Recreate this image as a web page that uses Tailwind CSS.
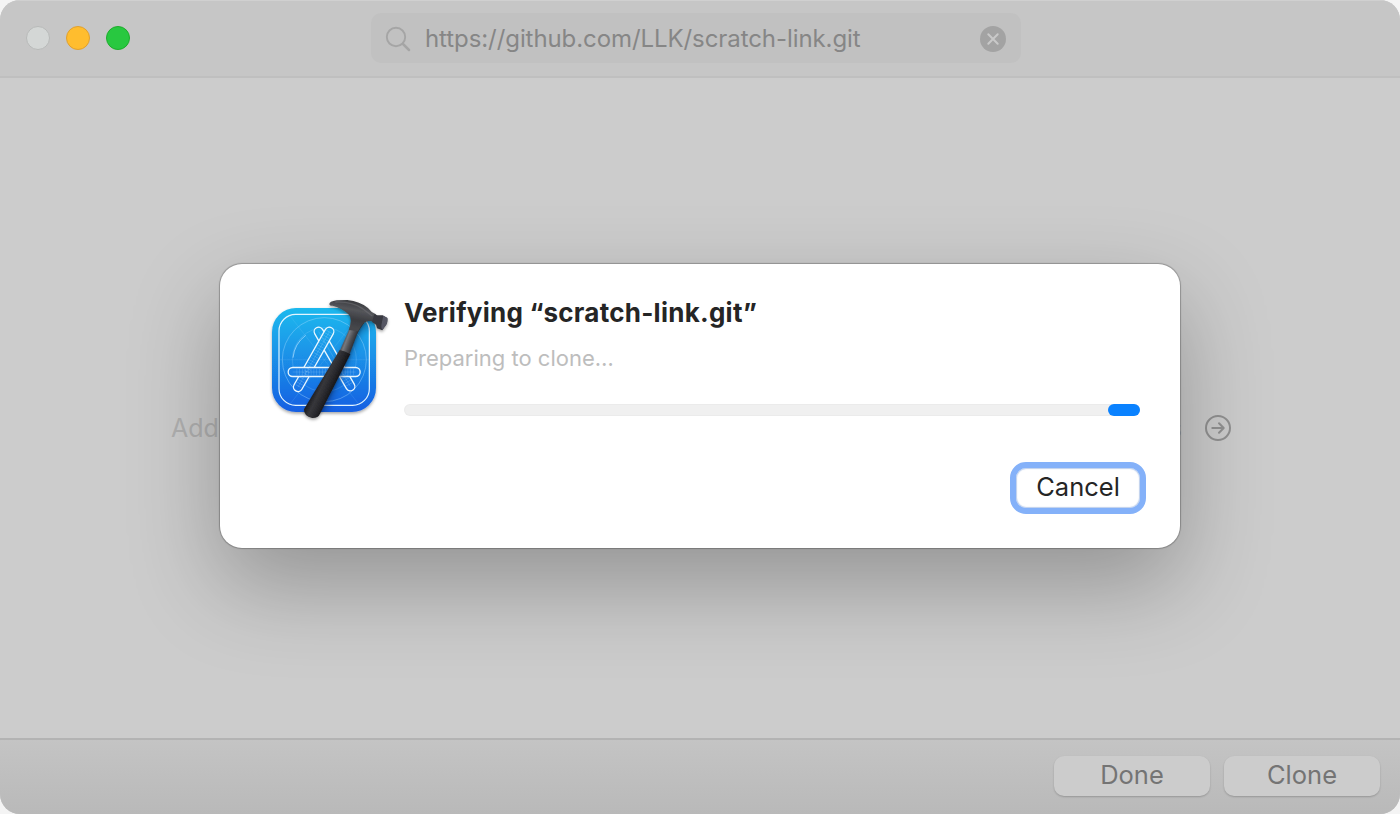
<!DOCTYPE html>
<html lang="en">
<head>
<meta charset="utf-8">
<title>Clone repository</title>
<script src="https://cdn.jsdelivr.net/npm/@tailwindcss/browser@4"></script>
</head>
<body class="bg-[#f4f4f4] font-['Inter',sans-serif]">
<div class="relative flex h-[814px] w-[1400px] flex-col overflow-hidden rounded-[20px] bg-[#cccccc]">
  <header class="relative flex h-[78px] shrink-0 items-start justify-center border-t border-b-2 border-t-[#d0d0d0] border-b-[#bfbfbf] bg-[#c6c6c6] pt-3 pr-2">
    <div class="absolute top-[25px] left-[26px] flex gap-4">
      <span class="size-6 rounded-full border border-[#b8bab9] bg-[#d4d7d6]"></span>
      <span class="size-6 rounded-full border border-[#e0a02e] bg-[#ffbd2e]"></span>
      <span class="size-6 rounded-full border border-[#1dad2b] bg-[#28c840]"></span>
    </div>
    <div class="flex h-[50px] w-[650px] items-center rounded-[10px] bg-[#c1c1c1] pt-[2px] pr-[15px] pl-[14px]">
      <svg class="size-7 shrink-0" viewBox="0 0 28 28" fill="none" stroke="#a5a5a5" stroke-linecap="round"><circle cx="11" cy="12" r="9.2" stroke-width="1.9"/><path d="M18 19l6 6" stroke-width="2.5"/></svg>
      <span class="ml-3 flex-1 text-2xl tracking-[-0.08px] whitespace-nowrap text-[#868686]">https://github.com/LLK/scratch-link.git</span>
      <svg class="size-[26px]" viewBox="0 0 26 26"><circle cx="13" cy="13" r="13" fill="#a3a3a3"/><path d="M8.3 8.3l9.4 9.4M17.7 8.3l-9.4 9.4" stroke="#c9c9c9" stroke-width="2" stroke-linecap="round"/></svg>
    </div>
  </header>

  <main class="flex flex-1 items-center pt-[39px] pr-[169px] pl-[171px]">
    <span class="pt-[2px] text-[25px] text-[#b0b0b0]">Add</span>
    <span class="ml-auto pt-[2px] text-[25px] text-[#b0b0b0]">s</span>
    <svg class="ml-[23px] size-[26px]" viewBox="0 0 26 26" fill="none" stroke="#919191" stroke-width="2" stroke-linecap="round" stroke-linejoin="round"><circle cx="13" cy="13" r="12"/><path d="M7.3 13h11M14 8.2l4.7 4.8-4.7 4.8"/></svg>
  </main>

  <footer class="flex h-[76px] shrink-0 items-start justify-end gap-[14px] border-t-2 border-[#b3b3b3] bg-linear-to-b from-[#c4c4c4] to-[#b9b9b9] pt-4 pr-5">
    <button class="h-10 w-[156px] rounded-[10px] bg-[#cccccc] pb-[2px] text-[25.5px] leading-[38px] text-[#747474] shadow-[0_1px_2px_rgba(0,0,0,0.2)]">Done</button>
    <button class="h-10 w-[156px] rounded-[10px] bg-[#cccccc] pb-[2px] text-[25.5px] leading-[38px] text-[#747474] shadow-[0_1px_2px_rgba(0,0,0,0.2)]">Clone</button>
  </footer>

  <section class="absolute top-[264px] left-[220px] flex h-[284px] w-[960px] rounded-[22px] bg-white pt-[26px] pr-[34px] pl-10 shadow-[0_0_1px_1px_rgba(0,0,0,0.25),0_36px_90px_rgba(0,0,0,0.28)]">
    <svg class="size-[140px] shrink-0" viewBox="0 0 420 420" fill="none">
      <defs>
        <linearGradient id="blue" gradientUnits="userSpaceOnUse" x1="0" y1="54" x2="0" y2="366"><stop stop-color="#1bb9ee"/><stop offset=".45" stop-color="#1a92e8"/><stop offset="1" stop-color="#185fe2"/></linearGradient>
        <linearGradient id="grip" gradientUnits="userSpaceOnUse" x1="180" y1="262" x2="224" y2="283"><stop stop-color="#1d1d20"/><stop offset=".35" stop-color="#37373b"/><stop offset=".7" stop-color="#29292d"/><stop offset="1" stop-color="#18181b"/></linearGradient>
        <linearGradient id="neck" gradientUnits="userSpaceOnUse" x1="252" y1="138" x2="288" y2="152"><stop stop-color="#3a3b3f"/><stop offset=".3" stop-color="#77787d"/><stop offset=".6" stop-color="#505156"/><stop offset="1" stop-color="#26262a"/></linearGradient>
        <linearGradient id="head" gradientUnits="userSpaceOnUse" x1="290" y1="32" x2="275" y2="112"><stop stop-color="#37383c"/><stop offset=".35" stop-color="#54555a"/><stop offset=".7" stop-color="#3b3c40"/><stop offset="1" stop-color="#46474b"/></linearGradient>
        <filter id="soft" x="-20%" y="-20%" width="140%" height="150%"><feDropShadow dx="0" dy="5" stdDeviation="5" flood-opacity=".35"/></filter>
        <clipPath id="tile"><rect x="36" y="54" width="312" height="312" rx="72"/></clipPath>
      </defs>
      <rect x="36" y="54" width="312" height="312" rx="72" fill="url(#blue)" filter="url(#soft)"/>
      <rect x="57" y="73" width="271" height="273" rx="50" stroke="#e4f5ff" stroke-width="3.5"/>
      <g stroke="#a8dcff" stroke-opacity=".5" stroke-width="2.4">
        <circle cx="193" cy="209" r="126"/><circle cx="193" cy="209" r="96" stroke-opacity=".25"/>
        <path d="M99 203A96 96 0 0 1 137 136" stroke-opacity=".95"/>
        <path d="M88 75L298 345M298 75L88 345M57 209H328" stroke-opacity=".15"/>
      </g>
      <g stroke-linecap="round">
        <path d="M176 125L271 289" stroke="#e9f7ff" stroke-width="31"/><path d="M176 125L271 289" stroke="url(#blue)" stroke-width="23"/>
        <path d="M208 125L114 291" stroke="#e9f7ff" stroke-width="31"/><path d="M208 125L114 291" stroke="url(#blue)" stroke-width="23"/>
        <path d="M98 246H287" stroke="#e9f7ff" stroke-width="31"/><path d="M98 246H287" stroke="#1b80e5" stroke-width="23"/>
      </g>
      <g stroke="#bfe6ff" stroke-opacity=".32" stroke-width="20" stroke-dasharray="1.5 7"><path d="M110 246H287M208 125L114 291M250 253L271 289"/></g>
      <g stroke="#bfe6ff" stroke-opacity=".35" stroke-width="1.5"><path d="M98 246H287M208 125L114 291M176 125L271 289"/></g>
      <g clip-path="url(#tile)"><path d="M330 100L294 118 180 376" stroke="#062a66" stroke-opacity=".4" stroke-width="26" stroke-linejoin="round" style="filter:blur(9px)"/></g>
      <g filter="url(#soft)">
        <path d="M272 80L313 98Q294 122 286 147L268 194 239 183 262 131Q274 106 272 80Z" fill="url(#neck)"/>
        <path d="M239 180Q255 183 271 193L180 371Q174 385 156 384 131 378 132 358Z" fill="url(#grip)"/>
        <path d="M208 43Q207 34 230 31L262 30Q300 34 324 54Q334 68 348 73L340 96Q326 89 312 99Q302 107 294 124L266 120Q281 88 265 73 247 55 218 47Q210 49 208 43Z" fill="url(#head)"/>
        <path d="M226 36Q276 34 308 56 324 68 337 78" stroke="#77787d" stroke-opacity=".45" stroke-width="4"/>
        <path d="M343 72L352 76 368 76 382 84 381 99 367 121 351 115 348 104 336 96Z" fill="#383940"/>
        <path d="M370 77L382 84Q385 92 379 105L367 120Q362 113 366 96Z" fill="#555764"/>
      </g>
    </svg>
    <div class="flex min-w-0 flex-1 flex-col pl-1">
      <h1 class="mt-[7px] text-[26px] leading-8 font-bold tracking-[0.26px] whitespace-nowrap text-[#252525]"><span>Verifying “scratch-link.git”</span></h1>
      <p class="mt-[15px] text-[22px] leading-7 whitespace-nowrap text-[#bdbdbd]"><span>Preparing to clone…</span></p>
      <div class="mt-8 mr-[6px] flex h-3 justify-end rounded-full bg-[#f0f0f0] shadow-[inset_0_0_1px_1px_rgba(0,0,0,0.025)]"><div class="w-8 rounded-full bg-[#0a82ff]"></div></div>
      <button class="mt-[46px] h-[52px] w-[136px] self-end rounded-[16px] border-[6px] border-[#84b1f9] bg-white pb-[2px] text-[25.5px] leading-[38px] text-[#252525] shadow-[inset_0_0_1px_1px_rgba(70,120,200,0.35)]">Cancel</button>
    </div>
  </section>
</div>
</body>
</html>
